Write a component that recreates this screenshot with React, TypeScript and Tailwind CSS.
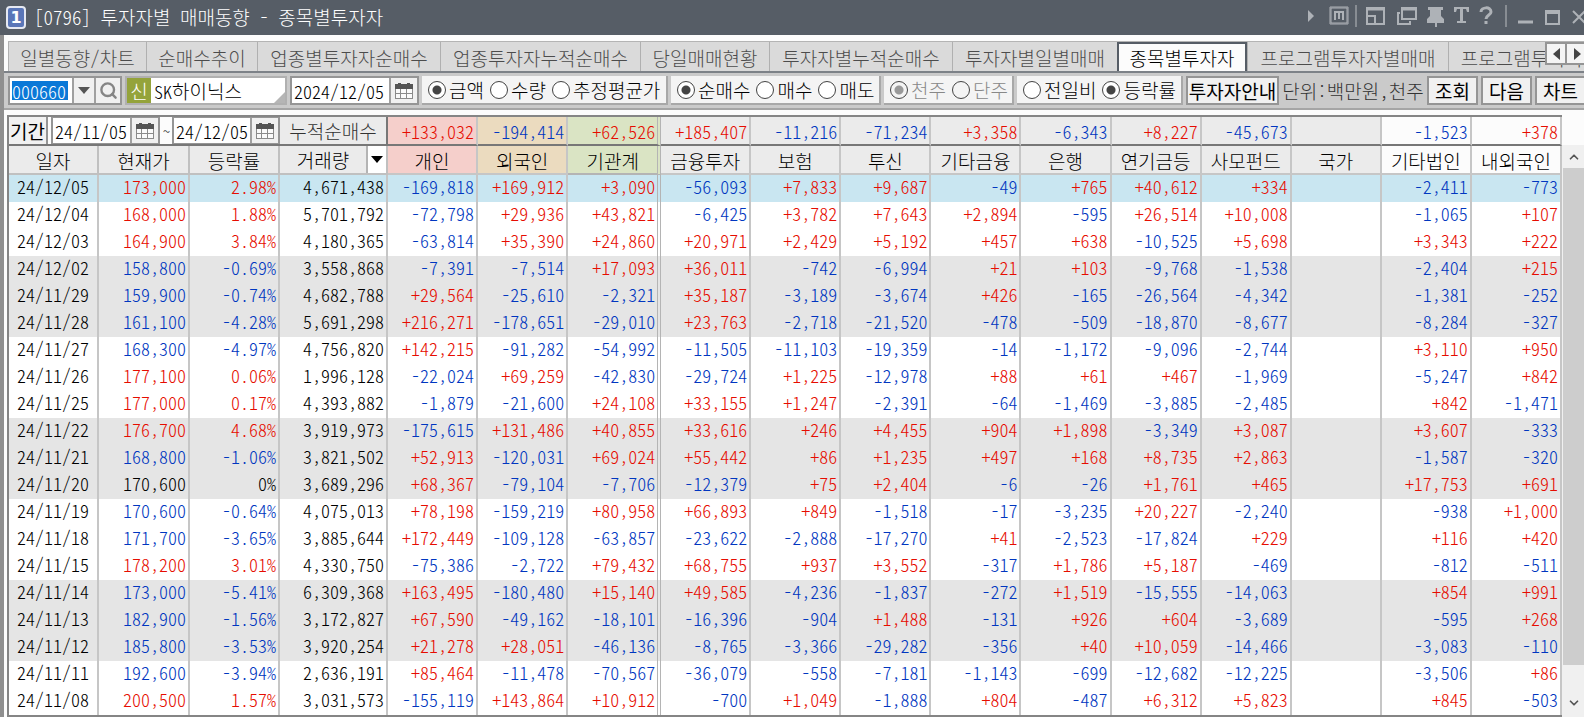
import { ChevronDown, ChevronUp, Search } from "lucide-react";
import type { ReactNode } from "react";

const tabs = [
  { label: "일별동향/차트", width: "w-[138px]" },
  { label: "순매수추이", width: "w-[111px]" },
  { label: "업종별투자자순매수", width: "w-[183px]" },
  { label: "업종투자자누적순매수", width: "w-[200px]" },
  { label: "당일매매현황", width: "w-[129px]" },
  { label: "투자자별누적순매수", width: "w-[183px]" },
  { label: "투자자별일별매매", width: "w-[165px]" },
  { label: "종목별투자자", width: "w-[130px]" },
  { label: "프로그램투자자별매매", width: "w-[201px]" },
  { label: "프로그램투자자", width: "w-[147px]" }
];

const activeTab = "종목별투자자";

const investors = [
  { label: "개인", total: "+133,032", tint: "bg-[#f5cfcb]" },
  { label: "외국인", total: "-194,414", tint: "bg-[#ebdbbf]" },
  { label: "기관계", total: "+62,526", tint: "bg-[#dae4c4]" },
  { label: "금융투자", total: "+185,407", tint: "bg-[#ebebeb]" },
  { label: "보험", total: "-11,216", tint: "bg-[#ebebeb]" },
  { label: "투신", total: "-71,234", tint: "bg-[#ebebeb]" },
  { label: "기타금융", total: "+3,358", tint: "bg-[#ebebeb]" },
  { label: "은행", total: "-6,343", tint: "bg-[#ebebeb]" },
  { label: "연기금등", total: "+8,227", tint: "bg-[#ebebeb]" },
  { label: "사모펀드", total: "-45,673", tint: "bg-[#ebebeb]" },
  { label: "국가", total: "", tint: "bg-[#ebebeb]" },
  { label: "기타법인", total: "-1,523", tint: "bg-[#fcfcfc]" },
  { label: "내외국인", total: "+378", tint: "bg-[#fcfcfc]" }
];

// date | price | change | volume | investor columns
const rows = `
24/12/05|173,000|2.98%|4,671,438|-169,818|+169,912|+3,090|-56,093|+7,833|+9,687|-49|+765|+40,612|+334||-2,411|-773
24/12/04|168,000|1.88%|5,701,792|-72,798|+29,936|+43,821|-6,425|+3,782|+7,643|+2,894|-595|+26,514|+10,008||-1,065|+107
24/12/03|164,900|3.84%|4,180,365|-63,814|+35,390|+24,860|+20,971|+2,429|+5,192|+457|+638|-10,525|+5,698||+3,343|+222
24/12/02|158,800|-0.69%|3,558,868|-7,391|-7,514|+17,093|+36,011|-742|-6,994|+21|+103|-9,768|-1,538||-2,404|+215
24/11/29|159,900|-0.74%|4,682,788|+29,564|-25,610|-2,321|+35,187|-3,189|-3,674|+426|-165|-26,564|-4,342||-1,381|-252
24/11/28|161,100|-4.28%|5,691,298|+216,271|-178,651|-29,010|+23,763|-2,718|-21,520|-478|-509|-18,870|-8,677||-8,284|-327
24/11/27|168,300|-4.97%|4,756,820|+142,215|-91,282|-54,992|-11,505|-11,103|-19,359|-14|-1,172|-9,096|-2,744||+3,110|+950
24/11/26|177,100|0.06%|1,996,128|-22,024|+69,259|-42,830|-29,724|+1,225|-12,978|+88|+61|+467|-1,969||-5,247|+842
24/11/25|177,000|0.17%|4,393,882|-1,879|-21,600|+24,108|+33,155|+1,247|-2,391|-64|-1,469|-3,885|-2,485||+842|-1,471
24/11/22|176,700|4.68%|3,919,973|-175,615|+131,486|+40,855|+33,616|+246|+4,455|+904|+1,898|-3,349|+3,087||+3,607|-333
24/11/21|168,800|-1.06%|3,821,502|+52,913|-120,031|+69,024|+55,442|+86|+1,235|+497|+168|+8,735|+2,863||-1,587|-320
24/11/20|170,600|0%|3,689,296|+68,367|-79,104|-7,706|-12,379|+75|+2,404|-6|-26|+1,761|+465||+17,753|+691
24/11/19|170,600|-0.64%|4,075,013|+78,198|-159,219|+80,958|+66,893|+849|-1,518|-17|-3,235|+20,227|-2,240||-938|+1,000
24/11/18|171,700|-3.65%|3,885,644|+172,449|-109,128|-63,857|-23,622|-2,888|-17,270|+41|-2,523|-17,824|+229||+116|+420
24/11/15|178,200|3.01%|4,330,750|-75,386|-2,722|+79,432|+68,755|+937|+3,552|-317|+1,786|+5,187|-469||-812|-511
24/11/14|173,000|-5.41%|6,309,368|+163,495|-180,480|+15,140|+49,585|-4,236|-1,837|-272|+1,519|-15,555|-14,063||+854|+991
24/11/13|182,900|-1.56%|3,172,827|+67,590|-49,162|-18,101|-16,396|-904|+1,488|-131|+926|+604|-3,689||-595|+268
24/11/12|185,800|-3.53%|3,920,254|+21,278|+28,051|-46,136|-8,765|-3,366|-29,282|-356|+40|+10,059|-14,466||-3,083|-110
24/11/11|192,600|-3.94%|2,636,191|+85,464|-11,478|-70,567|-36,079|-558|-7,181|-1,143|-699|-12,682|-12,225||-3,506|+86
24/11/08|200,500|1.57%|3,031,573|-155,119|+143,864|+10,912|-700|+1,049|-1,888|+804|-487|+6,312|+5,823||+845|-503
`
  .trim()
  .split("\n")
  .map((line) => line.split("|"));

const up = "text-[#e60c00]";
const down = "text-[#0036c0]";

function signColor(value: string) {
  if (value.startsWith("-")) return down;
  return value === "0%" ? "text-black" : up;
}

function rowTint(index: number) {
  if (index === 0) return "bg-[#c9e6f1]";
  return Math.floor(index / 3) % 2 === 1 ? "bg-[#e5e5e5]" : "bg-white";
}

function columnEdge(index: number) {
  return index === 2 ? "border-r-4 border-double border-[#b4b4b4]" : "border-r-2 border-[#c6c6c6]";
}

function CalendarIcon() {
  return (
    <svg width="18" height="16" viewBox="0 0 18 16" shapeRendering="crispEdges" aria-hidden="true">
      <path d="M0 2h18v14H0z" fill="#8a8a8a" />
      <path d="M0 1h18v5H0z" fill="#555" />
      <path d="M3 0h3v4H3zM12 0h3v4h-3z" fill="#555" />
      <path d="M1 6h4v4H1zM6 6h5v4H6zM12 6h5v4h-5zM1 11h4v4H1zM6 11h5v4H6zM12 11h5v4h-5z" fill="#fafafa" />
    </svg>
  );
}

function CalendarButton({ label }: { label: string }) {
  return (
    <button aria-label={label} className="flex w-7 shrink-0 items-center justify-center border-l-2 border-[#a0a0a0] bg-[#f0f0f0]">
      <CalendarIcon />
    </button>
  );
}

function DateField({ label, value, width }: { label: string; value: string; width: string }) {
  return (
    <div className="flex h-[29px] shrink-0 border-2 border-[#959595] bg-white">
      <input aria-label={label} defaultValue={value} className={`${width} bg-white pl-[2px] text-[18px] leading-5 outline-none`} />
      <CalendarButton label={`${label} 달력`} />
    </div>
  );
}

function ToolButton({ children, width }: { children: ReactNode; width: string }) {
  return (
    <button
      className={`${width} h-[29px] shrink-0 border-2 border-[#959595] bg-[#f1f1f1] text-[19px] leading-5 font-normal whitespace-nowrap text-black`}
    >
      {children}
    </button>
  );
}

type RadioGroupProps = {
  name: string;
  options: string[];
  selected: string;
  width: string;
  disabled?: boolean;
};

function RadioGroup({ name, options, selected, width, disabled }: RadioGroupProps) {
  return (
    <fieldset
      disabled={disabled}
      className={`${width} flex h-[29px] shrink-0 items-center gap-[6px] border-r-2 border-b-2 border-[#a8a8a8] bg-[#f4f4f4] pl-[6px]`}
    >
      {options.map((option) => (
        <label key={option} className={`flex items-center gap-[3px] whitespace-nowrap ${disabled ? "text-[#888]" : "text-black"}`}>
          <input
            type="radio"
            name={name}
            defaultChecked={option === selected}
            className="size-[18px] shrink-0 appearance-none rounded-full border border-[#444] bg-white bg-clip-padding checked:bg-[radial-gradient(circle,#444_0_4px,#fff_5px)] disabled:bg-[#f4f4f4] disabled:checked:bg-[radial-gradient(circle,#999_0_4px,#f4f4f4_5px)]"
          />
          {option}
        </label>
      ))}
    </fieldset>
  );
}

function WindowIcons() {
  return (
    <svg
      width="278"
      height="35"
      viewBox="0 0 278 35"
      fill="none"
      stroke="currentColor"
      strokeWidth="2"
      className="shrink-0 text-[#aeb2b7]"
      aria-hidden="true"
    >
      <path d="M2 10v12l6-6z" fill="currentColor" stroke="none" />
      <path d="M24 7h18v17H24z" strokeWidth="1" />
      <path d="M25 8h16v15H25z" strokeWidth="1" />
      <path d="M29 20v-8h8v8M33 12v7" />
      <path d="M50 5v22" stroke="#888d93" />
      <path d="M61 8h17v16H61z" />
      <path d="M60 9h19" strokeWidth="3" />
      <path d="M61 16h8v8" />
      <path d="M96 8h14v11H96z" />
      <path d="M95 9h16" strokeWidth="3" />
      <path d="M94 13h-2v11h12v-3" />
      <path d="M122 7h15v3h-2v6l3 3v4h-17v-4l3-3v-6h-2zM129 23h2v4h-2z" fill="currentColor" stroke="none" />
      <path d="M148 7h15v5h-2l-1-3h-3v12h3v2h-9v-2h3V9h-3l-1 3h-2z" fill="currentColor" stroke="none" />
      <path d="M175 12c0-5 10-6 10 0 0 3-5 3-5 7M180 21v3" strokeWidth="3" />
      <path d="M200 5v22" stroke="#888d93" />
      <path d="M212 22h15" strokeWidth="3" />
      <path d="M240 11h13v13h-13z" />
      <path d="M239 12h15" strokeWidth="4" />
      <path d="M267 11l12 12M279 11l-12 12" strokeWidth="2" />
    </svg>
  );
}

function TitleBar() {
  return (
    <header className="flex h-[35px] items-center overflow-hidden bg-[#565d66] pl-[6px] text-white">
      <span className="flex h-[23px] w-5 items-center justify-center rounded border-2 border-[#e6e9f2] bg-[#5a76b8] font-['DejaVu_Sans'] text-base font-bold">
        1
      </span>
      <h1 className="ml-2 flex-1 pb-[2px] whitespace-nowrap text-white">[0796] 투자자별 매매동향 - 종목별투자자</h1>
      <WindowIcons />
    </header>
  );
}

function TabBar() {
  return (
    <nav className="flex h-[38px] overflow-hidden border-b-2 border-[#7d8288] bg-[#fcfcfc] pt-[6px] pl-1">
      <div className="relative flex flex-1 overflow-hidden border-t border-[#b4b4b4] bg-[#dadada]">
        {tabs.map((tab) => (
          <button
            key={tab.label}
            className={`${tab.width} shrink-0 overflow-hidden whitespace-nowrap ${
              tab.label === activeTab
                ? "border-2 border-b-0 border-[#565d66] bg-[#fcfcfc] text-black"
                : "border-l border-[#b0b0b0] pt-[2px] text-[#4c4c4c]"
            }`}
          >
            {tab.label}
          </button>
        ))}
        <div className="absolute top-0 right-0 flex h-[23px] w-[39px] overflow-hidden border-2 border-r-0 border-[#959595] bg-[#f4f4f4]">
          <button aria-label="이전 탭" className="flex w-5 shrink-0 items-center justify-center border-r-2 border-[#959595]">
            <svg width="7" height="12" aria-hidden="true">
              <path d="M7 0v12L0 6z" fill="#444" />
            </svg>
          </button>
          <button aria-label="다음 탭" className="flex w-5 shrink-0 items-center justify-center">
            <svg width="7" height="12" aria-hidden="true">
              <path d="M0 0v12l7-6z" fill="#444" />
            </svg>
          </button>
        </div>
      </div>
    </nav>
  );
}

function Toolbar() {
  return (
    <div className="flex h-[37px] items-center gap-[3px] overflow-hidden border-b-2 border-[#a5a5a5] bg-[#cacaca] pl-1">
      <div className="flex h-[29px] shrink-0 border-2 border-[#959595] bg-white">
        <div className="flex w-[62px] items-center pl-[2px]">
          <input aria-label="종목코드" defaultValue="000660" className="h-[19px] w-14 bg-[#0a78d7] text-[18px] text-white outline-none" />
        </div>
        <button aria-label="종목 목록" className="flex w-[22px] items-center justify-center border-l-2 border-[#a0a0a0] bg-[#f0f0f0]">
          <svg width="12" height="7" aria-hidden="true">
            <path d="M0 0h12L6 7z" fill="#555" />
          </svg>
        </button>
        <button aria-label="종목 검색" className="flex w-[26px] items-center justify-center border-l-2 border-[#a0a0a0] bg-[#f0f0f0]">
          <Search size={19} strokeWidth={3} color="#858585" />
        </button>
      </div>
      <div className="relative flex h-[29px] w-[162px] shrink-0 items-center border-2 border-[#b0b0b0] bg-white">
        <span className="flex h-[25px] w-6 items-center justify-center bg-[#94a33b] text-white">신</span>
        <span className="ml-[3px] text-black">
          <span className="text-[18px]">SK</span>하이닉스
        </span>
        <svg width="11" height="11" className="absolute right-0 bottom-0" aria-hidden="true">
          <path d="M11 0v11H0z" fill="#b5b5b5" />
        </svg>
      </div>
      <DateField label="기준일" value="2024/12/05" width="w-[97px]" />
      <RadioGroup name="unit" options={["금액", "수량", "추정평균가"]} selected="금액" width="w-[246px]" />
      <RadioGroup name="side" options={["순매수", "매수", "매도"]} selected="순매수" width="w-[210px]" />
      <RadioGroup name="scale" options={["천주", "단주"]} selected="천주" width="w-[130px]" disabled />
      <RadioGroup name="change" options={["전일비", "등락률"]} selected="등락률" width="w-[166px]" />
      <ToolButton width="w-[93px]">투자자안내</ToolButton>
      <span className="w-[142px] shrink-0 text-center whitespace-nowrap text-[#333]">단위:백만원,천주</span>
      <ToolButton width="w-[51px]">조회</ToolButton>
      <ToolButton width="w-[51px]">다음</ToolButton>
      <ToolButton width="w-[51px]">차트</ToolButton>
    </div>
  );
}

function InvestorTable() {
  return (
    <table className="w-full table-fixed border-separate border-spacing-0 border-t-2 border-b-2 border-l-2 border-[#858585]">
      <colgroup>
        <col className="w-[90px]" />
        <col className="w-[91px]" />
        <col className="w-[90px]" />
        <col className="w-[108px]" />
        {investors.map((investor) => (
          <col key={investor.label} className={investor.label === "기관계" ? "w-[93px]" : ""} />
        ))}
      </colgroup>
      <thead>
        <tr className="h-[29px]">
          <td colSpan={3} className="border-b-2 border-[#777] bg-[#fcfcfc] p-0">
            <div className="flex h-[27px] items-center gap-[3px] overflow-hidden">
              <button className="h-[27px] w-[42px] border-r-2 border-[#959595] bg-[#f1f1f1] font-normal">기간</button>
              <DateField label="시작일" value="24/11/05" width="w-[77px]" />
              <span className="w-[6px] text-sm text-[#333]">~</span>
              <DateField label="종료일" value="24/12/05" width="w-[76px]" />
            </div>
          </td>
          <td className="border-r-2 border-b-2 border-[#777] bg-[#ebebeb] p-0 text-center text-[#333]">누적순매수</td>
          {investors.map((investor, index) => (
            <td
              key={investor.label}
              className={`${columnEdge(index)} ${investor.tint} ${signColor(investor.total)} border-b-2 border-b-[#777] p-0 pr-[2px] text-right text-[18px]`}
            >
              {investor.total}
            </td>
          ))}
        </tr>
        <tr className="h-[29px]">
          {["일자", "현재가", "등락률"].map((label) => (
            <th key={label} className="border-r-2 border-b-2 border-[#c0c0c0] bg-[#ebebeb] p-0 pt-[2px] font-light">
              {label}
            </th>
          ))}
          <th className="border-r-2 border-b-2 border-[#c0c0c0] bg-[#ebebeb] p-0 font-light">
            <div className="flex h-[27px] items-stretch">
              <span className="flex-1 pt-[2px]">거래량</span>
              <button aria-label="거래량 정렬" className="flex w-5 items-center justify-center border-l-2 border-[#b4b4b4] bg-white">
                <svg width="12" height="7" aria-hidden="true">
                  <path d="M0 0h12L6 7z" fill="#000" />
                </svg>
              </button>
            </div>
          </th>
          {investors.map((investor, index) => (
            <th key={investor.label} className={`${columnEdge(index)} ${investor.tint} border-b-2 p-0 pt-[2px] font-light`}>
              {investor.label}
            </th>
          ))}
        </tr>
      </thead>
      <tbody className="text-right text-[18px] leading-[22px]">
        {rows.map(([date, price, change, volume, ...flows], index) => (
          <tr key={date} className={`h-[27px] ${rowTint(index)}`}>
            <td className="border-r-2 border-[#c6c6c6] p-0 pb-[5px] text-center">{date}</td>
            <td className={`border-r-2 border-[#c6c6c6] p-0 pr-[2px] pb-[5px] ${signColor(change)}`}>{price}</td>
            <td className={`border-r-2 border-[#c6c6c6] p-0 pr-[2px] pb-[5px] ${signColor(change)}`}>{change}</td>
            <td className="border-r-2 border-[#c6c6c6] p-0 pr-[2px] pb-[5px]">{volume}</td>
            {flows.map((value, column) => (
              <td key={investors[column].label} className={`${columnEdge(column)} ${signColor(value)} p-0 pr-[2px] pb-[5px]`}>
                {value}
              </td>
            ))}
          </tr>
        ))}
      </tbody>
    </table>
  );
}

function ScrollBar() {
  return (
    <div className="mt-[30px] flex w-[22px] shrink-0 flex-col bg-[#f0f0f0] pl-px">
      <button aria-label="위로" className="flex h-[23px] items-center justify-center">
        <ChevronUp size={14} strokeWidth={3} color="#555" />
      </button>
      <div className="flex-1 bg-[#cdcdcd]" />
      <div className="h-[24px]" />
      <button aria-label="아래로" className="flex h-[28px] items-center justify-center">
        <ChevronDown size={14} strokeWidth={3} color="#555" />
      </button>
    </div>
  );
}

export default function App() {
  return (
    <div
      lang="ko"
      className="flex min-h-screen w-full flex-col overflow-hidden bg-[#fcfcfc] font-['Noto_Sans_CJK_KR',sans-serif] text-[19px] leading-6 font-light text-black [font-feature-settings:'hwid'_1]"
    >
      <TitleBar />
      <main className="flex flex-1 flex-col border-l-4 border-[#8f8f8f]">
        <TabBar />
        <Toolbar />
        <div className="flex pt-[5px] pl-[3px]">
          <div className="min-w-0 flex-1">
            <InvestorTable />
          </div>
          <ScrollBar />
        </div>
      </main>
    </div>
  );
}
